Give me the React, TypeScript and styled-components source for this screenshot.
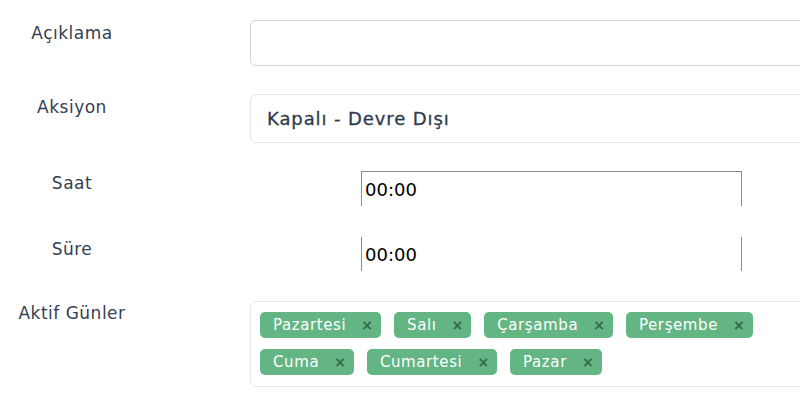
import React from 'react'
import styled, { createGlobalStyle } from 'styled-components'

const GlobalStyle = createGlobalStyle`
  html, body {
    margin: 0;
    padding: 0;
    background: #ffffff;
    overflow: hidden;
  }
  body {
    font-family: 'DejaVu Sans', 'Open Sans', sans-serif;
    color: #344054;
  }
`

const days = [
  'Pazartesi',
  'Salı',
  'Çarşamba',
  'Perşembe',
  'Cuma',
  'Cumartesi',
  'Pazar',
]

const App = () => {
  return (
    <>
      <GlobalStyle />
      <Form>
        <Row $mt={20}>
          <Label $pt={1}>Açıklama</Label>
          <TextInput />
        </Row>

        <Row $mt={28}>
          <Label $pt={1}>Aksiyon</Label>
          <SelectBox>Kapalı - Devre Dışı</SelectBox>
        </Row>

        <Row $mt={28}>
          <Label $pt={0}>Saat</Label>
          <TimeBox $top>00:00</TimeBox>
        </Row>

        <Row $mt={31}>
          <Label $pt={0}>Süre</Label>
          <TimeBox>00:00</TimeBox>
        </Row>

        <Row $mt={30}>
          <Label $pt={0}>Aktif Günler</Label>
          <TagBox>
            {days.map(d => (
              <Tag key={d}>
                {d}
                <Remove>×</Remove>
              </Tag>
            ))}
          </TagBox>
        </Row>
      </Form>
    </>
  )
}

/* Styles */
const Form = styled.div`
  width: 800px;
  height: 400px;
  display: flex;
  flex-direction: column;
  overflow: hidden;
`

const Row = styled.div<{ $mt: number }>`
  display: grid;
  grid-template-columns: 250px 580px;
  margin-top: ${p => p.$mt}px;
`

const Label = styled.div<{ $pt: number }>`
  width: 144px;
  text-align: center;
  padding-top: ${p => p.$pt}px;
  font-size: 17px;
  line-height: 24px;
  letter-spacing: 0.5px;
  color: #344054;
`

const TextInput = styled.div`
  height: 44px;
  border: 1px solid #d0d5dd;
  border-radius: 5px;
`

const SelectBox = styled.div`
  height: 47px;
  border: 1px solid #e4e7ec;
  border-radius: 6px;
  display: flex;
  align-items: center;
  padding-left: 16px;
  font-size: 18px;
  letter-spacing: 0.9px;
  -webkit-text-stroke: 0.3px #2d3a4f;
  color: #2d3a4f;
`

const TimeBox = styled.div<{ $top?: boolean }>`
  margin-left: 111px;
  width: 376px;
  height: 34px;
  border-left: 1px solid #8a8a8f;
  border-right: 1px solid #8a8a8f;
  border-top: ${p => (p.$top ? '1px solid #8a8a8f' : 'none')};
  display: flex;
  align-items: center;
  padding-left: 3px;
  font-family: 'DejaVu Sans', sans-serif;
  font-size: 18px;
  color: #000;
`

const TagBox = styled.div`
  height: 74px;
  border: 1px solid #e4e7ec;
  border-radius: 6px;
  padding: 10px 0 0 9px;
  display: flex;
  flex-wrap: wrap;
  align-content: flex-start;
  column-gap: 13px;
  row-gap: 11px;
`

const Tag = styled.div`
  height: 26px;
  display: flex;
  align-items: center;
  padding: 0 8px 0 13px;
  border-radius: 5px;
  background: #63b584;
  color: #ffffff;
  font-size: 15px;
  letter-spacing: 0.6px;
`

const Remove = styled.span`
  margin-left: 15px;
  font-size: 14px;
  font-weight: 700;
  color: #37684a;
  line-height: 1;
  letter-spacing: 0;
`

export default App
